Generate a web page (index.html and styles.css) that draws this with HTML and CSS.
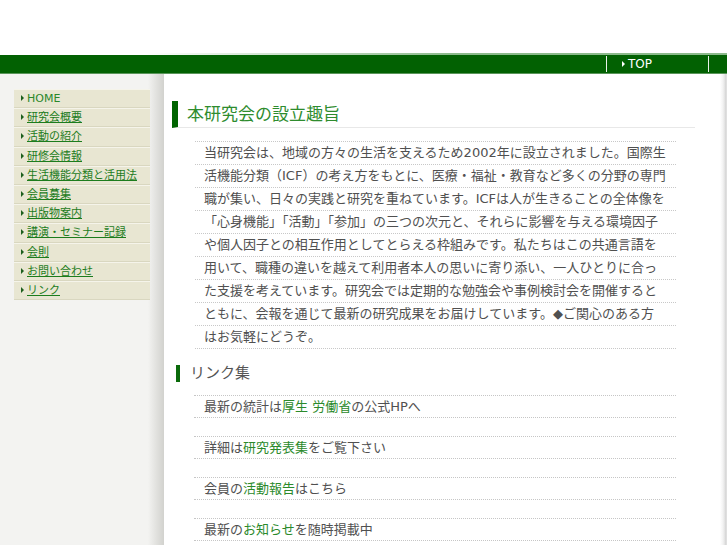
FILE: index.html
```html
<!DOCTYPE html>
<html lang="ja">
<head>
<meta charset="utf-8">
<title>本研究会の設立趣旨</title>
<link rel="stylesheet" href="styles.css">
</head>
<body>
<header class="header"></header>
<nav class="gnav">
  <a class="gnav-item" href="#">TOP</a>
</nav>
<div class="page">
  <aside class="side">
    <ul class="menu">
      <li class="menu-item current"><a href="#">HOME</a></li>
      <li class="menu-item"><a href="#">研究会概要</a></li>
      <li class="menu-item"><a href="#">活動の紹介</a></li>
      <li class="menu-item"><a href="#">研修会情報</a></li>
      <li class="menu-item"><a href="#">生活機能分類と活用法</a></li>
      <li class="menu-item"><a href="#">会員募集</a></li>
      <li class="menu-item"><a href="#">出版物案内</a></li>
      <li class="menu-item"><a href="#">講演・セミナー記録</a></li>
      <li class="menu-item"><a href="#">会則</a></li>
      <li class="menu-item"><a href="#">お問い合わせ</a></li>
      <li class="menu-item"><a href="#">リンク</a></li>
    </ul>
  </aside>
  <main class="main">
    <h1 class="title">本研究会の設立趣旨</h1>
    <p class="lead">当研究会は、地域の方々の生活を支えるため2002年に設立されました。国際生活機能分類（ICF）の考え方をもとに、医療・福祉・教育など多くの分野の専門職が集い、日々の実践と研究を重ねています。ICFは人が生きることの全体像を「心身機能」「活動」「参加」の三つの次元と、それらに影響を与える環境因子や個人因子との相互作用としてとらえる枠組みです。私たちはこの共通言語を用いて、職種の違いを越えて利用者本人の思いに寄り添い、一人ひとりに合った支援を考えています。研究会では定期的な勉強会や事例検討会を開催するとともに、会報を通じて最新の研究成果をお届けしています。◆ご関心のある方はお気軽にどうぞ。</p>
    <h2 class="sub">リンク集</h2>
    <ul class="links">
      <li class="link-item">最新の統計は<a href="#">厚生 労働省</a>の公式HPへ</li>
      <li class="link-item">詳細は<a href="#">研究発表集</a>をご覧下さい</li>
      <li class="link-item">会員の<a href="#">活動報告</a>はこちら</li>
      <li class="link-item">最新の<a href="#">お知らせ</a>を随時掲載中</li>
    </ul>
  </main>
  <div class="edge"></div>
</div>
</body>
</html>
```
FILE: styles.css
```css
html, body {
  margin: 0;
  padding: 0;
  background: #fff;
}
body {
  font-family: "DejaVu Sans", "Noto Sans CJK JP", sans-serif;
  color: #505050;
}
.header {
  height: 53px;
}
.gnav {
  display: flex;
  justify-content: flex-end;
  height: 18px;
  padding: 2px 18px 0 0;
  border-bottom: 1px solid #5a955a;
  background:
    linear-gradient(to right, #ffffff 0%, #ffffff 20%, #8cba8c 62%, #8cba8c 100%) top left / 100% 2px no-repeat,
    #026102;
}
.gnav-item {
  display: flex;
  align-items: center;
  width: 103px;
  box-sizing: border-box;
  margin: 1px 0 1px;
  padding-left: 15px;
  border-left: 1px solid #e9f1e9;
  border-right: 1px solid #e9f1e9;
  color: #fff;
  font-size: 12px;
  text-decoration: none;
}
.gnav-item::before {
  content: "";
  display: inline-block;
  width: 0;
  height: 0;
  margin-right: 3px;
  border-top: 3px solid transparent;
  border-bottom: 3px solid transparent;
  border-left: 3px solid #fff;
}
.page {
  display: flex;
  min-height: 471px;
}
.side {
  flex: none;
  width: 164px;
  box-sizing: border-box;
  padding: 15px 0 0 14px;
  background: linear-gradient(to right, #f3f3f1 0, #f3f3f1 148px, #e2e2df 156px, #d2d2ce 164px);
}
.menu {
  list-style: none;
  margin: 0;
  padding: 0;
  width: 136px;
}
.menu-item {
  height: 17.2px;
  line-height: 17px;
  padding-left: 7px;
  background: #e8e6d2;
  border-top: 1px solid #f5f4ea;
  border-bottom: 1px solid #d9d7c0;
  font-size: 11px;
  white-space: nowrap;
}
.menu-item::before {
  content: "";
  display: inline-block;
  width: 0;
  height: 0;
  margin-right: 3px;
  vertical-align: 1px;
  border-top: 3px solid transparent;
  border-bottom: 3px solid transparent;
  border-left: 3px solid #1d5f1d;
}
.menu-item a {
  color: #1c7c1c;
  text-decoration: underline;
}
.menu-item.current a {
  color: #2a882a;
  text-decoration: none;
}
.main {
  flex: 1;
  padding-top: 27px;
  background: #fff;
}
.title {
  margin: 0 25px 0 8px;
  height: 26px;
  line-height: 26px;
  padding-left: 9px;
  border-left: 6px solid #006400;
  border-bottom: 1px solid #e8e8e8;
  font-size: 17px;
  font-weight: normal;
  color: #2e8c2e;
}
.lead {
  margin: 13px 44px 0 30px;
  padding: 0 10px 1px;
  font-size: 13px;
  line-height: 23px;
  color: #505050;
  background-image:
    linear-gradient(to right, #fff 50%, transparent 50%),
    linear-gradient(to bottom, #c8c8c8 1px, transparent 1px);
  background-size: 2px 100%, 100% 23px;
}
.sub {
  margin: 16px 0 0 12px;
  padding-left: 10px;
  border-left: 4px solid #0a6a0a;
  font-size: 15px;
  line-height: 17px;
  font-weight: normal;
  color: #555;
}
.links {
  list-style: none;
  margin: 13px 44px 0 30px;
  padding: 0;
}
.link-item {
  margin-bottom: 18px;
  padding-left: 10px;
  line-height: 21px;
  font-size: 13px;
  color: #505050;
  border-top: 1px dotted #c6c6c6;
  border-bottom: 1px dotted #c6c6c6;
}
.link-item a {
  color: #2b8a2b;
  text-decoration: none;
}
.edge {
  flex: none;
  width: 7px;
  background: linear-gradient(to right, #ffffff 0, #f2f2f2 3px, #e0e0e0 5px, #d2d2d2 6px, #ececec 7px);
}
```
